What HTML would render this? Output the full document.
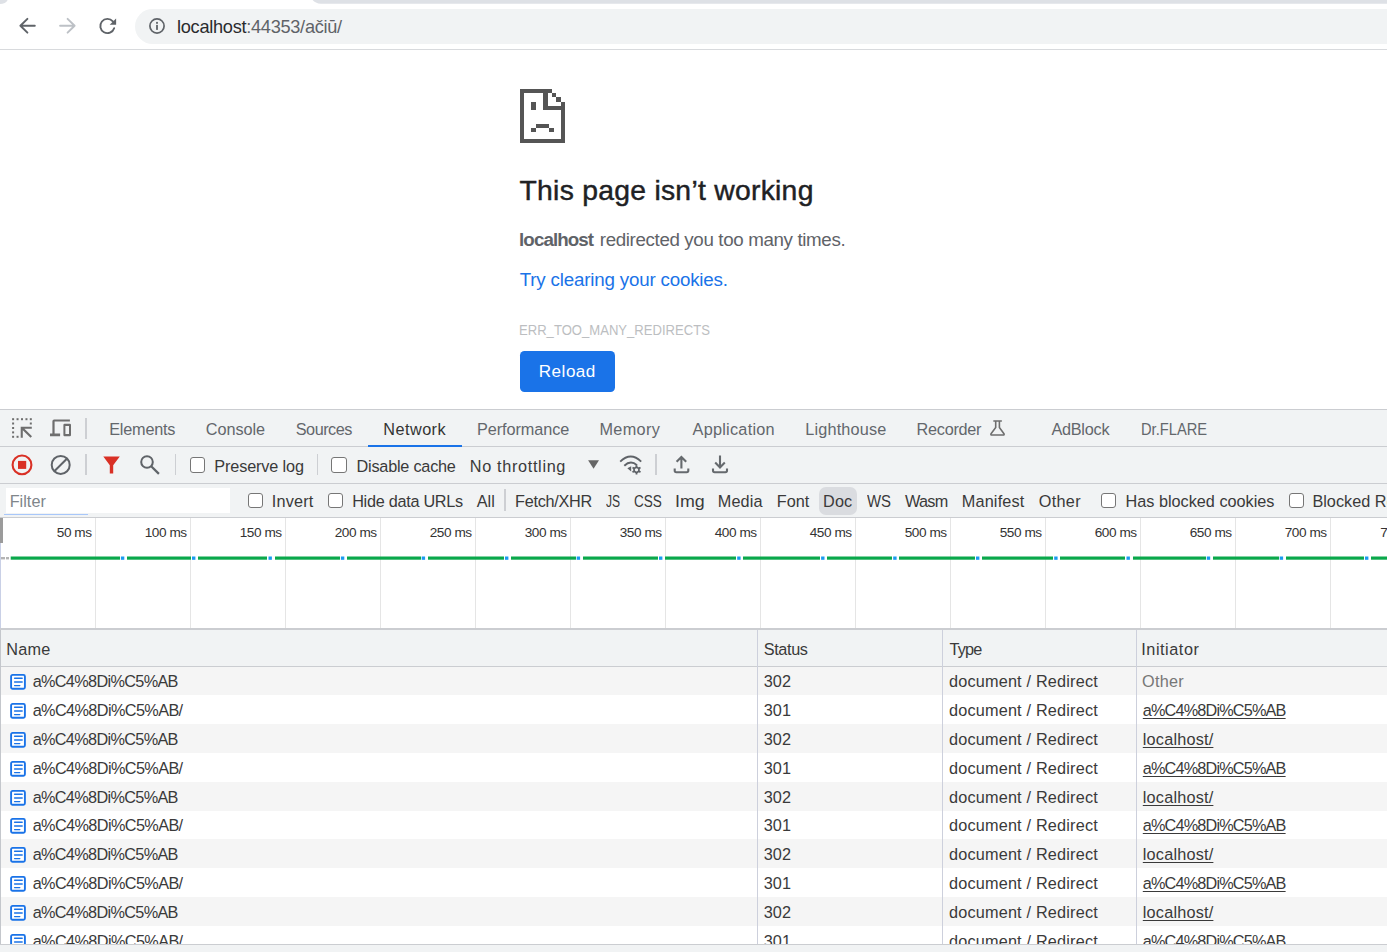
<!DOCTYPE html>
<html lang="en"><head><meta charset="utf-8"><title>localhost</title>
<style>
*{box-sizing:border-box}
html,body{margin:0;padding:0}
body{width:1387px;height:952px;overflow:hidden;background:#fff;position:relative;font-family:"Liberation Sans",Arial,sans-serif;}
.abs,.t,svg.i{position:absolute}
.t{white-space:nowrap;line-height:1;transform-origin:0 0;margin:0;padding:0;font-weight:normal;display:block;text-decoration:none}
.t b{font-weight:bold}
h1.t,p.t{font-weight:normal}
#chrome{position:absolute;left:0;top:0;width:1387px;height:50px;background:#fff}
#omnibox{position:absolute;left:134.6px;top:9px;width:1300px;height:35px;border-radius:17.5px;background:#f1f3f4}
#chrome-border{position:absolute;left:0;top:48.8px;width:1387px;height:1.2px;background:#d8dadd}
#page{position:absolute;left:0;top:50px;width:1387px;height:359px;background:#fff}
#reload{position:absolute;left:520px;top:351px;width:95px;height:40.5px;border-radius:4.5px;background:#1a73e8}
#devtools{position:absolute;left:0;top:409px;width:1387px;height:543px;background:#f1f3f4;overflow:hidden}
.hline{position:absolute;left:0;width:1387px;height:1px;background:#cbcdd1}
.vsep{position:absolute;width:1.6px;background:#cdcfd3}
.cb{position:absolute;width:15.5px;height:15.5px;border:1.3px solid #767676;border-radius:3px;background:#fff}
#filter-input{position:absolute;left:6px;top:488px;width:224px;height:25px;background:#fff}
#doc-pill{position:absolute;left:819px;top:487px;width:37.6px;height:28px;border-radius:7px;background:#dadce0}
#overview{position:absolute;left:0;top:518px;width:1387px;height:110px;background:#fff}
.grid{position:absolute;top:518px;width:1.2px;height:110px;background:#e5e5e5}
#thead{position:absolute;left:0;top:630px;width:1387px;height:36px;background:#f1f3f4}
.row{position:absolute;left:1px;width:1386px;height:29px}
.row.odd{background:#f5f5f5}
.row.even{background:#fff}
.coldiv{position:absolute;top:630px;width:1px;height:314px;background:#cdd0dc}
#statusbar{position:absolute;left:0;top:944px;width:1387px;height:8px;background:#f1f3f4;border-top:1px solid #cbcdd1}
</style></head>
<body>
<div id="chrome">
<svg class="i" style="left:0;top:0" width="1387" height="6" viewBox="0 0 1387 6"><path d="M0 0H7.6C6.6 2.6 3.5 4 0 4.1Z" fill="#dee1e6"/><path d="M312.6 0C314.5 2 317 3.7 321 3.7H1387V0Z" fill="#dee1e6"/></svg>
<div id="omnibox"></div>
<svg class="i" style="left:14px;top:12px" width="28" height="28" viewBox="14 12 28 28" fill="none" stroke-width="1.95" stroke-linecap="round" stroke-linejoin="round"><path stroke="#5f6368" d="M34.8 25.75H20.4M27.4 18.85L20.4 25.75L27.4 32.65"/></svg>
<svg class="i" style="left:54px;top:12px" width="28" height="28" viewBox="54 12 28 28" fill="none" stroke-width="1.95" stroke-linecap="round" stroke-linejoin="round"><path stroke="#bdc1c6" d="M60.1 25.75H74.6M67.6 18.85L74.6 25.75L67.6 32.65"/></svg>
<svg class="i" style="left:94px;top:12px" width="28" height="28" viewBox="94 12 28 28"><path d="M112.84 21.44A7.1 7.1 0 1 0 114.15 28.19" fill="none" stroke="#5f6368" stroke-width="1.9" stroke-linecap="round"/><path d="M116.1 18.4V24.85H109.7Z" fill="#5f6368"/></svg>
<svg class="i" style="left:148.3px;top:17.4px" width="18" height="18" viewBox="0 0 18 18"><circle cx="9" cy="9" r="7.1" fill="none" stroke="#5f6368" stroke-width="1.7"/><rect x="8.1" y="7.9" width="1.8" height="5" fill="#5f6368"/><rect x="8.1" y="4.9" width="1.8" height="1.9" fill="#5f6368"/></svg>
<span class="t" style="left:177.05px;top:18.02px;font-size:18.2px;color:#2a2b2e;letter-spacing:-0.29px;">localhost<span style="color:#5f6368">:44353/ačiū/</span></span>
<div id="chrome-border"></div>
</div>
<div id="page"></div>
<svg class="i" style="left:520px;top:89px" width="45" height="54" viewBox="0 0 45 54" shape-rendering="crispEdges" fill="#555555"><rect x="0" y="0" width="32" height="4"/><rect x="0" y="0" width="4" height="54"/><rect x="0" y="50" width="45" height="4"/><rect x="41" y="13" width="4" height="41"/><rect x="23.3" y="0" width="4.2" height="21"/><rect x="23.3" y="17" width="21.7" height="4"/><rect x="32.3" y="4.2" width="3.9" height="4"/><rect x="36.2" y="8.2" width="4.8" height="4.8"/><rect x="11" y="13" width="4.6" height="8"/><rect x="16" y="35" width="13" height="3.8"/><rect x="11" y="39" width="4.6" height="4"/><rect x="29.3" y="39" width="4.7" height="4"/></svg>
<div id="reload"></div>
<h1 class="t" style="left:519.5px;top:175.89px;font-size:28.3px;color:#202124;letter-spacing:0.275px;-webkit-text-stroke:0.45px #202124;">This page isn’t working</h1>
<p class="t" style="left:519.05px;top:230.66px;font-size:18.75px;color:#5f6368;letter-spacing:-0.906px;"><b>localhost</b></p>
<p class="t" style="left:599.75px;top:230.66px;font-size:18.75px;color:#5f6368;letter-spacing:-0.362px;">redirected you too many times.</p>
<a class="t" style="left:519.7px;top:271.06px;font-size:18.75px;color:#1a73e8;letter-spacing:-0.186px;">Try clearing your cookies.</a>
<div class="t" style="left:518.71px;top:322.22px;font-size:15px;color:#bcbec1;transform:scaleX(0.8719);">ERR_TOO_MANY_REDIRECTS</div>
<span class="t" style="left:538.8px;top:362.65px;font-size:17.1px;color:#ffffff;letter-spacing:0.48px;">Reload</span>
<div id="devtools"></div>
<div class="hline" style="top:409px"></div>
<div class="hline" style="top:446px"></div>
<div class="hline" style="top:483px"></div>
<div class="hline" style="top:517px"></div>
<svg class="i" style="left:10px;top:415px" width="26" height="26" viewBox="10 415 26 26" fill="#6e6e6e"><rect x="12.1" y="418.2" width="2" height="2"/><rect x="16.55" y="418.2" width="2" height="2"/><rect x="21" y="418.2" width="2" height="2"/><rect x="25.45" y="418.2" width="2" height="2"/><rect x="29.8" y="418.2" width="2" height="2"/><rect x="12.1" y="422.5" width="2" height="2"/><rect x="12.1" y="427" width="2" height="2"/><rect x="12.1" y="431.4" width="2" height="2"/><rect x="12.1" y="435.8" width="2" height="2"/><rect x="29.8" y="422.5" width="2" height="2"/><rect x="16.55" y="435.8" width="2" height="2"/><path d="M20.7 426.7H31.8V428.8H24.4L32 436.3L30.5 437.8L22.8 430.2V437.7H20.7Z"/></svg>
<svg class="i" style="left:48px;top:415px" width="26" height="26" viewBox="48 415 26 26" fill="#6e6e6e"><path d="M52.4 421.2Q52.4 419.5 54.1 419.5H69.9V421.6H54.6V433.6H60.1V436.2H50V433.6H52.4Z"/><path fill-rule="evenodd" d="M64.6 423.8H69.8Q71 423.8 71 425V435Q71 436.2 69.8 436.2H64.6Q63.4 436.2 63.4 435V425Q63.4 423.8 64.6 423.8ZM65.4 426V434H69V426Z"/></svg>
<div class="vsep" style="left:85.2px;top:417.5px;height:21px"></div>
<div class="abs" style="left:368.4px;top:444.8px;width:93.7px;height:2px;background:#1a73e8"></div>
<svg class="i" style="left:986px;top:417px" width="22" height="22" viewBox="986 417 22 22"><path d="M993.9 421H1001.3M995.7 421V427.6L991.2 433.4Q990.2 435 992 435H1003Q1004.8 435 1003.8 433.4L999.4 427.6V421" fill="none" stroke="#6e6e6e" stroke-width="1.6" stroke-linejoin="round" stroke-linecap="round"/></svg>
<span class="t" style="left:109.25px;top:421.17px;font-size:16.25px;color:#63676c;letter-spacing:-0.214px;">Elements</span>
<span class="t" style="left:205.75px;top:421.17px;font-size:16.25px;color:#63676c;letter-spacing:-0.058px;">Console</span>
<span class="t" style="left:295.75px;top:421.17px;font-size:16.25px;color:#63676c;letter-spacing:-0.492px;">Sources</span>
<span class="t" style="left:383.35px;top:421.17px;font-size:16.25px;color:#333;letter-spacing:0.442px;">Network</span>
<span class="t" style="left:476.95px;top:421.17px;font-size:16.25px;color:#63676c;letter-spacing:-0.07px;">Performance</span>
<span class="t" style="left:599.45px;top:421.17px;font-size:16.25px;color:#63676c;letter-spacing:0.35px;">Memory</span>
<span class="t" style="left:692.6px;top:421.17px;font-size:16.25px;color:#63676c;letter-spacing:0.25px;">Application</span>
<span class="t" style="left:805.25px;top:421.17px;font-size:16.25px;color:#63676c;letter-spacing:0.167px;">Lighthouse</span>
<span class="t" style="left:916.55px;top:421.17px;font-size:16.25px;color:#63676c;letter-spacing:-0.264px;">Recorder</span>
<span class="t" style="left:1051.4px;top:421.17px;font-size:16.25px;color:#63676c;letter-spacing:-0.25px;">AdBlock</span>
<span class="t" style="left:1141.17px;top:421.17px;font-size:16.25px;color:#63676c;transform:scaleX(0.9039);">Dr.FLARE</span>
<svg class="i" style="left:10px;top:453px" width="24" height="24" viewBox="10 453 24 24"><circle cx="22" cy="464.9" r="9.4" fill="none" stroke="#d93025" stroke-width="2.1"/><rect x="18" y="460.9" width="8.2" height="8" fill="#d93025"/></svg>
<svg class="i" style="left:48px;top:453px" width="24" height="24" viewBox="48 453 24 24"><circle cx="60.7" cy="464.9" r="9" fill="none" stroke="#5f6368" stroke-width="2"/><path d="M54.3 471.3L67.1 458.5" stroke="#5f6368" stroke-width="2"/></svg>
<div class="vsep" style="left:85.4px;top:454.3px;height:21.2px"></div>
<svg class="i" style="left:100px;top:453px" width="24" height="24" viewBox="100 453 24 24"><path d="M103.3 456.5H119.8L113.2 465.3V473.5H109.8V465.3Z" fill="#d93025"/></svg>
<svg class="i" style="left:137px;top:452px" width="26" height="26" viewBox="137 452 26 26"><circle cx="147" cy="462" r="5.8" fill="none" stroke="#5f6368" stroke-width="2"/><path d="M151.2 466.2L158.9 473.9" stroke="#5f6368" stroke-width="2.2"/></svg>
<div class="vsep" style="left:174.8px;top:454.3px;height:21.2px"></div>
<div class="cb" style="left:189.8px;top:457px"></div>
<div class="vsep" style="left:316.6px;top:454.3px;height:21.2px"></div>
<div class="cb" style="left:331.3px;top:457px"></div>
<svg class="i" style="left:586px;top:458px" width="16" height="13" viewBox="586 458 16 13"><path d="M588.1 460.2H599L593.55 468.8Z" fill="#666"/></svg>
<svg class="i" style="left:618px;top:453px" width="28" height="24" viewBox="618 453 28 24"><g fill="none" stroke="#5f6368" stroke-width="1.9"><path d="M620.2 461.6Q630.7 451.6 641.2 461.6"/><path d="M624.3 465.7Q630.7 459.6 637 465.2"/></g><path d="M627.3 468.3L631.2 466.2V471.6Z" fill="#5f6368"/><g transform="translate(636.5 469.8)"><circle r="2.5" fill="none" stroke="#5f6368" stroke-width="1.7"/><g stroke="#5f6368" stroke-width="1.8"><path d="M0 -4.6V-2.8M0 4.6V2.8M-4 -2.3L-2.4 -1.4M4 2.3L2.4 1.4M-4 2.3L-2.4 1.4M4 -2.3L2.4 -1.4"/></g></g></svg>
<div class="vsep" style="left:655.2px;top:454.3px;height:21.2px"></div>
<svg class="i" style="left:670px;top:453px" width="24" height="24" viewBox="670 453 24 24" fill="none" stroke="#666a6e" stroke-width="2.1"><path d="M681.4 468.4V457.4M676.6 461.8L681.4 457L686.2 461.8"/><path d="M674.7 468.6V470.6Q674.7 472.2 676.3 472.2H686.7Q688.3 472.2 688.3 470.6V468.6"/></svg>
<svg class="i" style="left:708px;top:453px" width="24" height="24" viewBox="708 453 24 24" fill="none" stroke="#666a6e" stroke-width="2.1"><path d="M720 455.6V467.2M715.2 462.6L720 467.4L724.8 462.6"/><path d="M713 468.6V470.6Q713 472.2 714.6 472.2H725.4Q727 472.2 727 470.6V468.6"/></svg>
<span class="t" style="left:214.35px;top:458.17px;font-size:16.25px;color:#3a3a3a;letter-spacing:-0.145px;">Preserve log</span>
<span class="t" style="left:356.55px;top:458.17px;font-size:16.25px;color:#3a3a3a;letter-spacing:-0.229px;">Disable cache</span>
<span class="t" style="left:469.85px;top:458.17px;font-size:16.25px;color:#3a3a3a;letter-spacing:0.662px;">No throttling</span>
<div id="filter-input"></div>
<div class="abs" style="left:4px;top:514.3px;width:84px;height:1px;background:#a8c7fa"></div>
<div id="doc-pill"></div>
<div class="cb" style="left:248px;top:492.8px;width:15px;height:15px"></div>
<div class="cb" style="left:328px;top:492.8px;width:15px;height:15px"></div>
<div class="cb" style="left:1100.8px;top:492.8px;width:15px;height:15px"></div>
<div class="cb" style="left:1288.8px;top:492.8px;width:15px;height:15px"></div>
<div class="vsep" style="left:504px;top:489px;height:21.5px"></div>
<span class="t" style="left:9.65px;top:493.07px;font-size:16.25px;color:#80868b;letter-spacing:0.02px;">Filter</span>
<span class="t" style="left:271.8px;top:493.07px;font-size:16.25px;color:#3a3a3a;letter-spacing:0.16px;">Invert</span>
<span class="t" style="left:352.15px;top:493.07px;font-size:16.25px;color:#3a3a3a;letter-spacing:-0.281px;">Hide data URLs</span>
<span class="t" style="left:476.8px;top:493.07px;font-size:16.25px;color:#3a3a3a;letter-spacing:-0.05px;">All</span>
<span class="t" style="left:515.05px;top:493.07px;font-size:16.25px;color:#3a3a3a;letter-spacing:-0.275px;">Fetch/XHR</span>
<span class="t" style="left:606.21px;top:493.07px;font-size:16.25px;color:#3a3a3a;transform:scaleX(0.7444);">JS</span>
<span class="t" style="left:634.07px;top:493.07px;font-size:16.25px;color:#3a3a3a;transform:scaleX(0.8344);">CSS</span>
<span class="t" style="left:674.65px;top:493.07px;font-size:16.25px;color:#3a3a3a;transform:scaleX(1.098);">Img</span>
<span class="t" style="left:717.75px;top:493.07px;font-size:16.25px;color:#3a3a3a;letter-spacing:0.15px;">Media</span>
<span class="t" style="left:776.75px;top:493.07px;font-size:16.25px;color:#3a3a3a;letter-spacing:0.017px;">Font</span>
<span class="t" style="left:823.05px;top:493.07px;font-size:16.25px;color:#3a3a3a;letter-spacing:0.125px;">Doc</span>
<span class="t" style="left:866.67px;top:493.07px;font-size:16.25px;color:#3a3a3a;transform:scaleX(0.9188);">WS</span>
<span class="t" style="left:904.95px;top:493.07px;font-size:16.25px;color:#3a3a3a;letter-spacing:-0.7px;">Wasm</span>
<span class="t" style="left:961.75px;top:493.07px;font-size:16.25px;color:#3a3a3a;letter-spacing:0.171px;">Manifest</span>
<span class="t" style="left:1038.85px;top:493.07px;font-size:16.25px;color:#3a3a3a;letter-spacing:0.263px;">Other</span>
<span class="t" style="left:1125.55px;top:493.07px;font-size:16.25px;color:#3a3a3a;letter-spacing:-0.008px;">Has blocked cookies</span>
<span class="t" style="left:1312.45px;top:493.07px;font-size:16.25px;color:#3a3a3a;letter-spacing:-0.008px;">Blocked Requests</span>
<div id="overview"></div>
<div class="grid" style="left:94.95px"></div>
<div class="grid" style="left:189.95px"></div>
<div class="grid" style="left:284.95px"></div>
<div class="grid" style="left:379.95px"></div>
<div class="grid" style="left:474.95px"></div>
<div class="grid" style="left:569.95px"></div>
<div class="grid" style="left:664.95px"></div>
<div class="grid" style="left:759.95px"></div>
<div class="grid" style="left:854.95px"></div>
<div class="grid" style="left:949.95px"></div>
<div class="grid" style="left:1044.95px"></div>
<div class="grid" style="left:1139.95px"></div>
<div class="grid" style="left:1234.95px"></div>
<div class="grid" style="left:1329.95px"></div>
<div class="grid" style="left:1424.95px"></div>
<div class="abs" style="left:0;top:518px;width:3px;height:24.8px;background:#9b9b9b"></div>
<div class="abs" style="left:0;top:543px;width:1px;height:86px;background:#c9d0e6"></div>
<svg class="i" style="left:0;top:554px" width="1387" height="8" viewBox="0 554 1387 8" shape-rendering="crispEdges">
<rect x="1" y="557" width="4" height="2.4" fill="#b4b4b4" shape-rendering="auto"/><rect x="6" y="557" width="3" height="2.4" fill="#b4b4b4" shape-rendering="auto"/>
<rect x="10.7" y="556.5" width="1377" height="3.2" fill="#0aa84b" shape-rendering="auto"/>
<rect x="119.7" y="555" width="7.3" height="6" fill="#fff"/><rect x="120.9" y="556.5" width="3.4" height="3.3" fill="#1a9bf0" shape-rendering="auto"/>
<rect x="190.8" y="555" width="7.3" height="6" fill="#fff"/><rect x="192" y="556.5" width="3.4" height="3.3" fill="#1a9bf0" shape-rendering="auto"/>
<rect x="267.3" y="555" width="7.3" height="6" fill="#fff"/><rect x="268.5" y="556.5" width="3.4" height="3.3" fill="#1a9bf0" shape-rendering="auto"/>
<rect x="339.7" y="555" width="7.3" height="6" fill="#fff"/><rect x="340.9" y="556.5" width="3.4" height="3.3" fill="#1a9bf0" shape-rendering="auto"/>
<rect x="420.5" y="555" width="7.3" height="6" fill="#fff"/><rect x="421.7" y="556.5" width="3.4" height="3.3" fill="#1a9bf0" shape-rendering="auto"/>
<rect x="503.8" y="555" width="7.3" height="6" fill="#fff"/><rect x="505" y="556.5" width="3.4" height="3.3" fill="#1a9bf0" shape-rendering="auto"/>
<rect x="575.5" y="555" width="7.3" height="6" fill="#fff"/><rect x="576.7" y="556.5" width="3.4" height="3.3" fill="#1a9bf0" shape-rendering="auto"/>
<rect x="657.8" y="555" width="7.3" height="6" fill="#fff"/><rect x="659" y="556.5" width="3.4" height="3.3" fill="#1a9bf0" shape-rendering="auto"/>
<rect x="736" y="555" width="7.3" height="6" fill="#fff"/><rect x="737.2" y="556.5" width="3.4" height="3.3" fill="#1a9bf0" shape-rendering="auto"/>
<rect x="819.9" y="555" width="7.3" height="6" fill="#fff"/><rect x="821.1" y="556.5" width="3.4" height="3.3" fill="#1a9bf0" shape-rendering="auto"/>
<rect x="892" y="555" width="7.3" height="6" fill="#fff"/><rect x="893.2" y="556.5" width="3.4" height="3.3" fill="#1a9bf0" shape-rendering="auto"/>
<rect x="974.8" y="555" width="7.3" height="6" fill="#fff"/><rect x="976" y="556.5" width="3.4" height="3.3" fill="#1a9bf0" shape-rendering="auto"/>
<rect x="1053" y="555" width="7.3" height="6" fill="#fff"/><rect x="1054.2" y="556.5" width="3.4" height="3.3" fill="#1a9bf0" shape-rendering="auto"/>
<rect x="1125.3" y="555" width="7.3" height="6" fill="#fff"/><rect x="1126.5" y="556.5" width="3.4" height="3.3" fill="#1a9bf0" shape-rendering="auto"/>
<rect x="1205.6" y="555" width="7.3" height="6" fill="#fff"/><rect x="1206.8" y="556.5" width="3.4" height="3.3" fill="#1a9bf0" shape-rendering="auto"/>
<rect x="1278.5" y="555" width="7.3" height="6" fill="#fff"/><rect x="1279.7" y="556.5" width="3.4" height="3.3" fill="#1a9bf0" shape-rendering="auto"/>
<rect x="1363.8" y="555" width="7.3" height="6" fill="#fff"/><rect x="1365" y="556.5" width="3.4" height="3.3" fill="#1a9bf0" shape-rendering="auto"/>
</svg>
<span class="t" style="left:56.8px;top:526.01px;font-size:13.6px;color:#333;letter-spacing:-0.45px;">50 ms</span>
<span class="t" style="left:144.75px;top:526.01px;font-size:13.6px;color:#333;letter-spacing:-0.45px;">100 ms</span>
<span class="t" style="left:239.75px;top:526.01px;font-size:13.6px;color:#333;letter-spacing:-0.45px;">150 ms</span>
<span class="t" style="left:334.75px;top:526.01px;font-size:13.6px;color:#333;letter-spacing:-0.45px;">200 ms</span>
<span class="t" style="left:429.75px;top:526.01px;font-size:13.6px;color:#333;letter-spacing:-0.45px;">250 ms</span>
<span class="t" style="left:524.75px;top:526.01px;font-size:13.6px;color:#333;letter-spacing:-0.45px;">300 ms</span>
<span class="t" style="left:619.75px;top:526.01px;font-size:13.6px;color:#333;letter-spacing:-0.45px;">350 ms</span>
<span class="t" style="left:714.75px;top:526.01px;font-size:13.6px;color:#333;letter-spacing:-0.45px;">400 ms</span>
<span class="t" style="left:809.75px;top:526.01px;font-size:13.6px;color:#333;letter-spacing:-0.45px;">450 ms</span>
<span class="t" style="left:904.75px;top:526.01px;font-size:13.6px;color:#333;letter-spacing:-0.45px;">500 ms</span>
<span class="t" style="left:999.75px;top:526.01px;font-size:13.6px;color:#333;letter-spacing:-0.45px;">550 ms</span>
<span class="t" style="left:1094.75px;top:526.01px;font-size:13.6px;color:#333;letter-spacing:-0.45px;">600 ms</span>
<span class="t" style="left:1189.75px;top:526.01px;font-size:13.6px;color:#333;letter-spacing:-0.45px;">650 ms</span>
<span class="t" style="left:1284.75px;top:526.01px;font-size:13.6px;color:#333;letter-spacing:-0.45px;">700 ms</span>
<span class="t" style="left:1380.15px;top:526.01px;font-size:13.6px;color:#333;letter-spacing:-0.45px;">750 ms</span>
<div class="hline" style="top:628px;height:2px"></div>
<div id="thead"></div>
<div class="hline" style="top:666px"></div>
<div class="row odd" style="top:667px"></div>
<svg class="i" style="left:9px;top:673.2px" width="18" height="18" viewBox="-1 -1 18 18"><rect x="1.1" y="0.9" width="13.8" height="13.8" rx="1.5" fill="#fff" stroke="#1a73e8" stroke-width="1.9"/><path d="M4.6 4.3H12.2M4.6 8H12.2M4.6 11.6H9.8" stroke="#1a73e8" stroke-width="1.4" stroke-linecap="round"/></svg>
<div class="row even" style="top:695px"></div>
<svg class="i" style="left:9px;top:702.05px" width="18" height="18" viewBox="-1 -1 18 18"><rect x="1.1" y="0.9" width="13.8" height="13.8" rx="1.5" fill="#fff" stroke="#1a73e8" stroke-width="1.9"/><path d="M4.6 4.3H12.2M4.6 8H12.2M4.6 11.6H9.8" stroke="#1a73e8" stroke-width="1.4" stroke-linecap="round"/></svg>
<div class="row odd" style="top:724px"></div>
<svg class="i" style="left:9px;top:730.9px" width="18" height="18" viewBox="-1 -1 18 18"><rect x="1.1" y="0.9" width="13.8" height="13.8" rx="1.5" fill="#fff" stroke="#1a73e8" stroke-width="1.9"/><path d="M4.6 4.3H12.2M4.6 8H12.2M4.6 11.6H9.8" stroke="#1a73e8" stroke-width="1.4" stroke-linecap="round"/></svg>
<div class="row even" style="top:753px"></div>
<svg class="i" style="left:9px;top:759.75px" width="18" height="18" viewBox="-1 -1 18 18"><rect x="1.1" y="0.9" width="13.8" height="13.8" rx="1.5" fill="#fff" stroke="#1a73e8" stroke-width="1.9"/><path d="M4.6 4.3H12.2M4.6 8H12.2M4.6 11.6H9.8" stroke="#1a73e8" stroke-width="1.4" stroke-linecap="round"/></svg>
<div class="row odd" style="top:782px"></div>
<svg class="i" style="left:9px;top:788.6px" width="18" height="18" viewBox="-1 -1 18 18"><rect x="1.1" y="0.9" width="13.8" height="13.8" rx="1.5" fill="#fff" stroke="#1a73e8" stroke-width="1.9"/><path d="M4.6 4.3H12.2M4.6 8H12.2M4.6 11.6H9.8" stroke="#1a73e8" stroke-width="1.4" stroke-linecap="round"/></svg>
<div class="row even" style="top:811px"></div>
<svg class="i" style="left:9px;top:817.45px" width="18" height="18" viewBox="-1 -1 18 18"><rect x="1.1" y="0.9" width="13.8" height="13.8" rx="1.5" fill="#fff" stroke="#1a73e8" stroke-width="1.9"/><path d="M4.6 4.3H12.2M4.6 8H12.2M4.6 11.6H9.8" stroke="#1a73e8" stroke-width="1.4" stroke-linecap="round"/></svg>
<div class="row odd" style="top:839px"></div>
<svg class="i" style="left:9px;top:846.3px" width="18" height="18" viewBox="-1 -1 18 18"><rect x="1.1" y="0.9" width="13.8" height="13.8" rx="1.5" fill="#fff" stroke="#1a73e8" stroke-width="1.9"/><path d="M4.6 4.3H12.2M4.6 8H12.2M4.6 11.6H9.8" stroke="#1a73e8" stroke-width="1.4" stroke-linecap="round"/></svg>
<div class="row even" style="top:868px"></div>
<svg class="i" style="left:9px;top:875.15px" width="18" height="18" viewBox="-1 -1 18 18"><rect x="1.1" y="0.9" width="13.8" height="13.8" rx="1.5" fill="#fff" stroke="#1a73e8" stroke-width="1.9"/><path d="M4.6 4.3H12.2M4.6 8H12.2M4.6 11.6H9.8" stroke="#1a73e8" stroke-width="1.4" stroke-linecap="round"/></svg>
<div class="row odd" style="top:897px"></div>
<svg class="i" style="left:9px;top:904px" width="18" height="18" viewBox="-1 -1 18 18"><rect x="1.1" y="0.9" width="13.8" height="13.8" rx="1.5" fill="#fff" stroke="#1a73e8" stroke-width="1.9"/><path d="M4.6 4.3H12.2M4.6 8H12.2M4.6 11.6H9.8" stroke="#1a73e8" stroke-width="1.4" stroke-linecap="round"/></svg>
<div class="row even" style="top:926px"></div>
<svg class="i" style="left:9px;top:932.85px" width="18" height="18" viewBox="-1 -1 18 18"><rect x="1.1" y="0.9" width="13.8" height="13.8" rx="1.5" fill="#fff" stroke="#1a73e8" stroke-width="1.9"/><path d="M4.6 4.3H12.2M4.6 8H12.2M4.6 11.6H9.8" stroke="#1a73e8" stroke-width="1.4" stroke-linecap="round"/></svg>
<div class="abs" style="left:0;top:630px;width:1px;height:314px;background:#c4c7cc"></div>
<div class="coldiv" style="left:757px"></div>
<div class="coldiv" style="left:942px"></div>
<div class="coldiv" style="left:1136px"></div>
<span class="t" style="left:6.35px;top:641.07px;font-size:16.25px;color:#3a3a3a;letter-spacing:0.233px;">Name</span>
<span class="t" style="left:763.75px;top:641.07px;font-size:16.25px;color:#3a3a3a;letter-spacing:-0.37px;">Status</span>
<span class="t" style="left:949.45px;top:641.07px;font-size:16.25px;color:#3a3a3a;letter-spacing:-0.817px;">Type</span>
<span class="t" style="left:1141.3px;top:641.07px;font-size:16.25px;color:#3a3a3a;letter-spacing:0.537px;">Initiator</span>
<span class="t" style="left:32.65px;top:673.17px;font-size:16.25px;color:#3a3a3a;letter-spacing:-0.665px;">a%C4%8Di%C5%AB</span>
<span class="t" style="left:763.65px;top:673.17px;font-size:16.25px;color:#3a3a3a;letter-spacing:0.1px;">302</span>
<span class="t" style="left:948.95px;top:673.17px;font-size:16.25px;color:#3a3a3a;letter-spacing:0.189px;">document / Redirect</span>
<span class="t" style="left:1142.05px;top:673.17px;font-size:16.25px;color:#777777;letter-spacing:0.213px;">Other</span>
<span class="t" style="left:32.65px;top:702.02px;font-size:16.25px;color:#3a3a3a;letter-spacing:-0.604px;">a%C4%8Di%C5%AB/</span>
<span class="t" style="left:763.65px;top:702.02px;font-size:16.25px;color:#3a3a3a;letter-spacing:0.1px;">301</span>
<span class="t" style="left:948.95px;top:702.02px;font-size:16.25px;color:#3a3a3a;letter-spacing:0.189px;">document / Redirect</span>
<span class="t" style="left:1142.8px;top:702.02px;font-size:16.25px;color:#3a3a3a;letter-spacing:-0.831px;text-decoration:underline;text-underline-offset:2px;">a%C4%8Di%C5%AB</span>
<span class="t" style="left:32.65px;top:730.87px;font-size:16.25px;color:#3a3a3a;letter-spacing:-0.665px;">a%C4%8Di%C5%AB</span>
<span class="t" style="left:763.65px;top:730.87px;font-size:16.25px;color:#3a3a3a;letter-spacing:0.1px;">302</span>
<span class="t" style="left:948.95px;top:730.87px;font-size:16.25px;color:#3a3a3a;letter-spacing:0.189px;">document / Redirect</span>
<span class="t" style="left:1142.8px;top:730.87px;font-size:16.25px;color:#3a3a3a;letter-spacing:0.194px;text-decoration:underline;text-underline-offset:2px;">localhost/</span>
<span class="t" style="left:32.65px;top:759.72px;font-size:16.25px;color:#3a3a3a;letter-spacing:-0.604px;">a%C4%8Di%C5%AB/</span>
<span class="t" style="left:763.65px;top:759.72px;font-size:16.25px;color:#3a3a3a;letter-spacing:0.1px;">301</span>
<span class="t" style="left:948.95px;top:759.72px;font-size:16.25px;color:#3a3a3a;letter-spacing:0.189px;">document / Redirect</span>
<span class="t" style="left:1142.8px;top:759.72px;font-size:16.25px;color:#3a3a3a;letter-spacing:-0.831px;text-decoration:underline;text-underline-offset:2px;">a%C4%8Di%C5%AB</span>
<span class="t" style="left:32.65px;top:788.57px;font-size:16.25px;color:#3a3a3a;letter-spacing:-0.665px;">a%C4%8Di%C5%AB</span>
<span class="t" style="left:763.65px;top:788.57px;font-size:16.25px;color:#3a3a3a;letter-spacing:0.1px;">302</span>
<span class="t" style="left:948.95px;top:788.57px;font-size:16.25px;color:#3a3a3a;letter-spacing:0.189px;">document / Redirect</span>
<span class="t" style="left:1142.8px;top:788.57px;font-size:16.25px;color:#3a3a3a;letter-spacing:0.194px;text-decoration:underline;text-underline-offset:2px;">localhost/</span>
<span class="t" style="left:32.65px;top:817.42px;font-size:16.25px;color:#3a3a3a;letter-spacing:-0.604px;">a%C4%8Di%C5%AB/</span>
<span class="t" style="left:763.65px;top:817.42px;font-size:16.25px;color:#3a3a3a;letter-spacing:0.1px;">301</span>
<span class="t" style="left:948.95px;top:817.42px;font-size:16.25px;color:#3a3a3a;letter-spacing:0.189px;">document / Redirect</span>
<span class="t" style="left:1142.8px;top:817.42px;font-size:16.25px;color:#3a3a3a;letter-spacing:-0.831px;text-decoration:underline;text-underline-offset:2px;">a%C4%8Di%C5%AB</span>
<span class="t" style="left:32.65px;top:846.27px;font-size:16.25px;color:#3a3a3a;letter-spacing:-0.665px;">a%C4%8Di%C5%AB</span>
<span class="t" style="left:763.65px;top:846.27px;font-size:16.25px;color:#3a3a3a;letter-spacing:0.1px;">302</span>
<span class="t" style="left:948.95px;top:846.27px;font-size:16.25px;color:#3a3a3a;letter-spacing:0.189px;">document / Redirect</span>
<span class="t" style="left:1142.8px;top:846.27px;font-size:16.25px;color:#3a3a3a;letter-spacing:0.194px;text-decoration:underline;text-underline-offset:2px;">localhost/</span>
<span class="t" style="left:32.65px;top:875.12px;font-size:16.25px;color:#3a3a3a;letter-spacing:-0.604px;">a%C4%8Di%C5%AB/</span>
<span class="t" style="left:763.65px;top:875.12px;font-size:16.25px;color:#3a3a3a;letter-spacing:0.1px;">301</span>
<span class="t" style="left:948.95px;top:875.12px;font-size:16.25px;color:#3a3a3a;letter-spacing:0.189px;">document / Redirect</span>
<span class="t" style="left:1142.8px;top:875.12px;font-size:16.25px;color:#3a3a3a;letter-spacing:-0.831px;text-decoration:underline;text-underline-offset:2px;">a%C4%8Di%C5%AB</span>
<span class="t" style="left:32.65px;top:903.97px;font-size:16.25px;color:#3a3a3a;letter-spacing:-0.665px;">a%C4%8Di%C5%AB</span>
<span class="t" style="left:763.65px;top:903.97px;font-size:16.25px;color:#3a3a3a;letter-spacing:0.1px;">302</span>
<span class="t" style="left:948.95px;top:903.97px;font-size:16.25px;color:#3a3a3a;letter-spacing:0.189px;">document / Redirect</span>
<span class="t" style="left:1142.8px;top:903.97px;font-size:16.25px;color:#3a3a3a;letter-spacing:0.194px;text-decoration:underline;text-underline-offset:2px;">localhost/</span>
<span class="t" style="left:32.65px;top:932.82px;font-size:16.25px;color:#3a3a3a;letter-spacing:-0.604px;">a%C4%8Di%C5%AB/</span>
<span class="t" style="left:763.65px;top:932.82px;font-size:16.25px;color:#3a3a3a;letter-spacing:0.1px;">301</span>
<span class="t" style="left:948.95px;top:932.82px;font-size:16.25px;color:#3a3a3a;letter-spacing:0.189px;">document / Redirect</span>
<span class="t" style="left:1142.8px;top:932.82px;font-size:16.25px;color:#3a3a3a;letter-spacing:-0.831px;text-decoration:underline;text-underline-offset:2px;">a%C4%8Di%C5%AB</span>
<div id="statusbar"></div>
</body></html>
